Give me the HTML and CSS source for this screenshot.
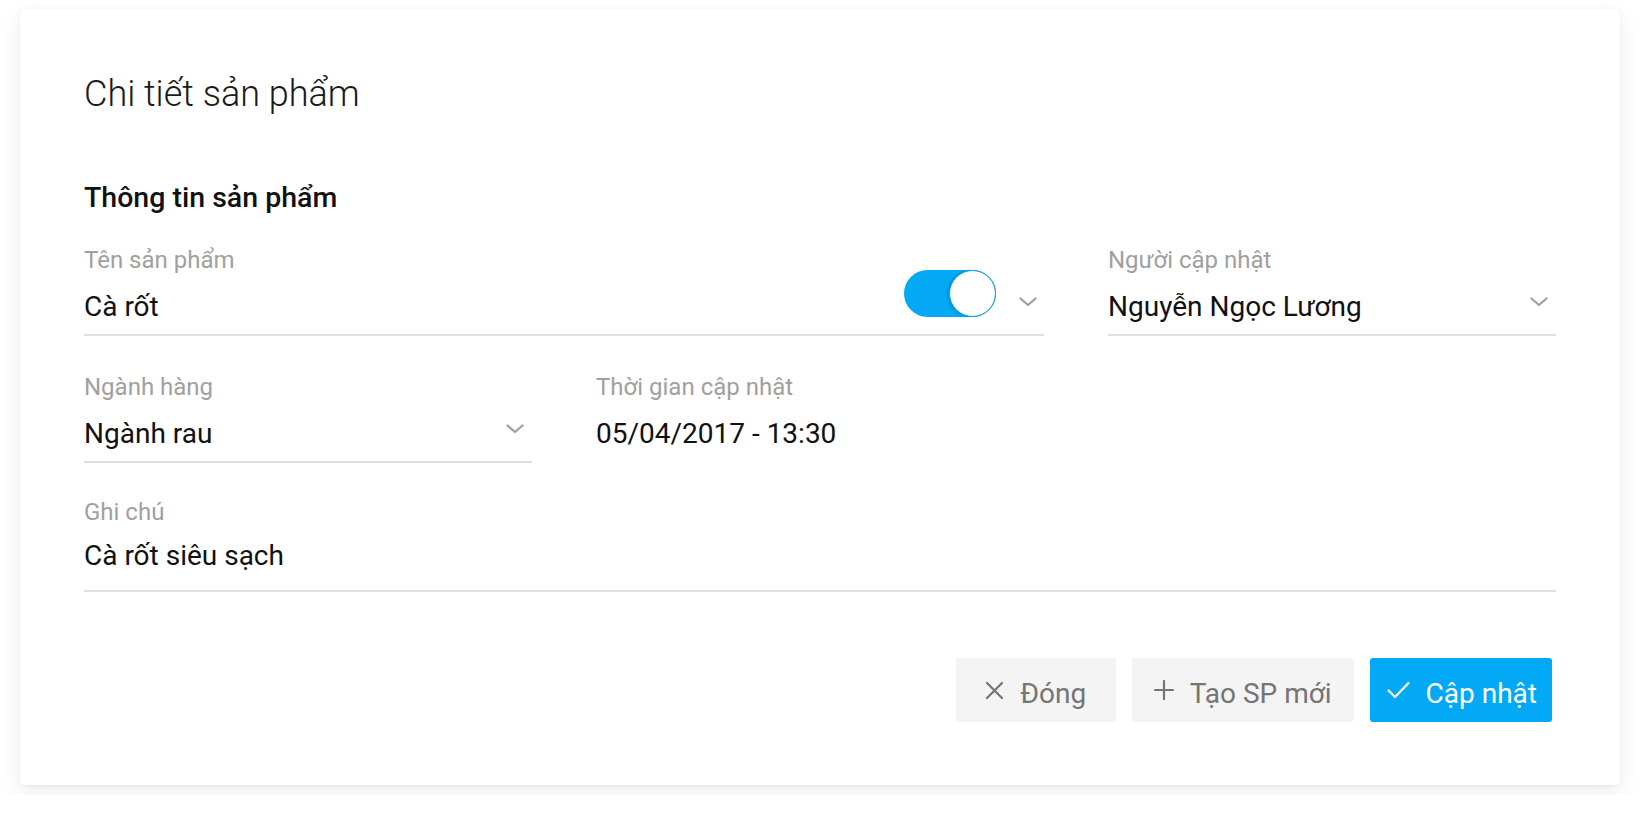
FILE: index.html
```html
<!DOCTYPE html>
<html lang="vi">
<head>
<meta charset="utf-8">
<title>Chi tiết sản phẩm</title>
<link rel="stylesheet" href="styles.css">
</head>
<body>
<div class="card">
  <h1 class="title">Chi tiết sản phẩm</h1>
  <h2 class="section">Thông tin sản phẩm</h2>
  <div class="grid">
    <div class="field span2">
      <div class="label">Tên sản phẩm</div>
      <div class="value-row">
        <div class="value">Cà rốt</div>
        <div class="toggle"><span class="knob"></span></div>
        <svg class="chev chev-first" width="18" height="10" viewBox="0 0 18 10"><path d="M1.5 1.5 L9 8 L16.5 1.5" fill="none" stroke="#9e9e9e" stroke-width="2.2" stroke-linecap="round" stroke-linejoin="round"/></svg>
      </div>
    </div>
    <div class="field">
      <div class="label">Người cập nhật</div>
      <div class="value-row">
        <div class="value">Nguyễn Ngọc Lương</div>
        <svg class="chev" width="18" height="10" viewBox="0 0 18 10"><path d="M1.5 1.5 L9 8 L16.5 1.5" fill="none" stroke="#9e9e9e" stroke-width="2.2" stroke-linecap="round" stroke-linejoin="round"/></svg>
      </div>
    </div>
    <div class="field">
      <div class="label">Ngành hàng</div>
      <div class="value-row">
        <div class="value">Ngành rau</div>
        <svg class="chev" width="18" height="10" viewBox="0 0 18 10"><path d="M1.5 1.5 L9 8 L16.5 1.5" fill="none" stroke="#9e9e9e" stroke-width="2.2" stroke-linecap="round" stroke-linejoin="round"/></svg>
      </div>
    </div>
    <div class="field plain">
      <div class="label">Thời gian cập nhật</div>
      <div class="value-row">
        <div class="value">05/04/2017 - 13:30</div>
      </div>
    </div>
    <div class="field span3 note">
      <div class="label">Ghi chú</div>
      <div class="value-row">
        <div class="value">Cà rốt siêu sạch</div>
      </div>
    </div>
  </div>
  <div class="actions">
    <button class="btn btn-gray btn-close">
      <svg width="19" height="19" viewBox="0 0 19 19"><path d="M2 2 L17 17 M17 2 L2 17" stroke="#757575" stroke-width="2.2" stroke-linecap="round"/></svg>
      <span class="btn-text">Đóng</span>
    </button>
    <button class="btn btn-gray btn-new">
      <svg width="20" height="20" viewBox="0 0 20 20"><path d="M10 1 V19 M1 10 H19" stroke="#757575" stroke-width="2.2" stroke-linecap="round"/></svg>
      <span class="btn-text">Tạo SP mới</span>
    </button>
    <button class="btn btn-blue">
      <svg width="23" height="18" viewBox="0 0 23 18"><path d="M1.5 9.5 L8 16 L21.5 2" fill="none" stroke="#ffffff" stroke-width="2.2" stroke-linecap="round" stroke-linejoin="round"/></svg>
      <span class="btn-text">Cập nhật</span>
    </button>
  </div>
</div>
</body>
</html>
```
FILE: styles.css
```css
* { box-sizing: border-box; }
html, body { margin: 0; }
body {
  background: #ffffff;
  padding: 10px 20px;
  font-family: Roboto, "Noto Sans", "Liberation Sans", sans-serif;
  color: #111;
}
.card {
  width: 1600px;
  background: #fff;
  border-radius: 4px;
  box-shadow: 0 6px 22px rgba(0,0,0,0.08), 0 1px 4px rgba(0,0,0,0.05);
  padding: 60px 64px 63px 64px;
}
.title {
  margin: 0;
  font-weight: 300;
  font-size: 36px;
  line-height: 48px;
  color: #1a1a1a;
}
.section {
  margin: 62px 0 0 0;
  font-weight: 500;
  font-size: 28.5px;
  line-height: 36px;
  color: #111;
}
.grid {
  margin-top: 28px;
  display: grid;
  grid-template-columns: repeat(3, 448px);
  column-gap: 64px;
  row-gap: 35px;
}
.span2 { grid-column: span 2; }
.span3 { grid-column: span 3; }
.field { display: flex; flex-direction: column; }
.label {
  font-size: 24px;
  line-height: 32px;
  font-weight: 400;
  color: #a0a0a0;
}
.value-row {
  margin-top: 11px;
  display: flex;
  align-items: flex-start;
  height: 49px;
  border-bottom: 2px solid #e0e0e0;
}
.note { margin-top: -2px; }
.note .value-row { margin-top: 8px; height: 56px; }
.plain .value-row { border-bottom-color: transparent; }
.value {
  flex: 1;
  font-size: 28px;
  line-height: 40px;
  color: #111;
}
.chev {
  margin-top: 10px;
  margin-right: 8px;
  flex: none;
}
.chev-first { margin-left: 23px; margin-right: 7px; }
.toggle {
  position: relative;
  width: 92px;
  height: 47px;
  margin-top: -17px;
  border-radius: 24px;
  background: #03a9f4;
  flex: none;
}
.knob {
  position: absolute;
  right: 0;
  top: 0;
  width: 47px;
  height: 47px;
  border-radius: 50%;
  background: #fff;
  border: 1.5px solid #0a9ad8;
  box-shadow: -2px 0 3px rgba(0,0,0,0.12);
}
.actions {
  margin-top: 66px;
  display: flex;
  justify-content: flex-end;
  gap: 16px;
  padding-right: 4px;
}
.btn {
  height: 64px;
  border: none;
  border-radius: 3px;
  display: flex;
  align-items: center;
  justify-content: center;
  gap: 16px;
  padding: 0 21px;
  font-family: Roboto, "Noto Sans", "Liberation Sans", sans-serif;
  font-size: 28px;
  line-height: 40px;
}
.btn-text { margin-top: 7px; }
.btn-gray { background: #f4f4f4; color: #757575; }
.btn-close { min-width: 160px; }
.btn-new { padding: 0 22px; }
.btn-blue { background: #03a9f4; color: #fff; padding: 0 15px 0 17px; }
.btn svg { flex: none; }
```
